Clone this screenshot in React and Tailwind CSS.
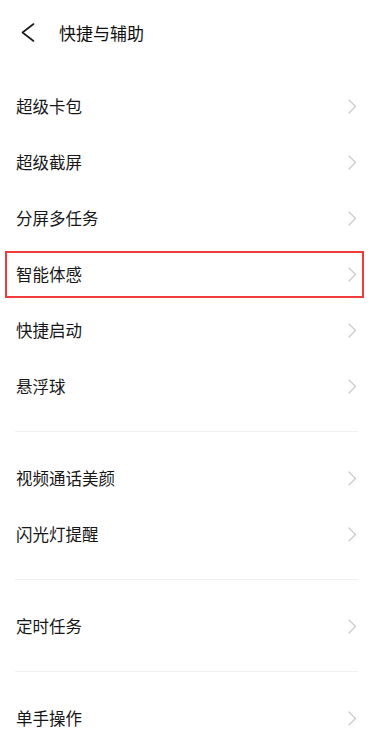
import React from "react";

const font = { fontFamily: '"Noto Sans CJK SC", "Noto Sans", sans-serif' };

function Chevron() {
  return (
    <svg width="9" height="15" viewBox="0 0 9 15" fill="none" className="shrink-0">
      <path d="M1 1 L7.5 7.5 L1 14" stroke="#c9c9c9" strokeWidth="1.2" strokeLinecap="round" strokeLinejoin="round" />
    </svg>
  );
}

function Row({ label, highlight }) {
  return (
    <div className="relative h-[56px] flex items-center justify-between pl-4 pr-[16px]">
      <span className="text-[16.5px] leading-none text-[#171717]">{label}</span>
      <Chevron />
      {highlight && (
        <div className="absolute top-[5px] bottom-[4px] left-[5px] right-[9px] border-2 border-[#f03c3c]" />
      )}
    </div>
  );
}

function Divider() {
  return (
    <div className="pt-[17px] pb-[18px]">
      <div className="mx-[15px] h-px bg-[#f1f1f1]" />
    </div>
  );
}

export default function App() {
  return (
    <div className="w-[373px] h-[734px] bg-white overflow-hidden" style={font}>
      <div className="h-[64px] flex items-center pl-[21px]">
        <svg width="14" height="19" viewBox="0 0 14 19" fill="none" className="shrink-0">
          <path d="M12.5 1 L1.5 9.5 L12.5 18" stroke="#1a1a1a" strokeWidth="1.6" strokeLinecap="round" strokeLinejoin="round" />
        </svg>
        <span className="ml-[24px] text-[17px] leading-none text-[#111]">快捷与辅助</span>
      </div>
      <div className="pt-[14px]">
        <Row label="超级卡包" />
        <Row label="超级截屏" />
        <Row label="分屏多任务" />
        <Row label="智能体感" highlight />
        <Row label="快捷启动" />
        <Row label="悬浮球" />
        <Divider />
        <Row label="视频通话美颜" />
        <Row label="闪光灯提醒" />
        <Divider />
        <Row label="定时任务" />
        <Divider />
        <Row label="单手操作" />
      </div>
    </div>
  );
}
